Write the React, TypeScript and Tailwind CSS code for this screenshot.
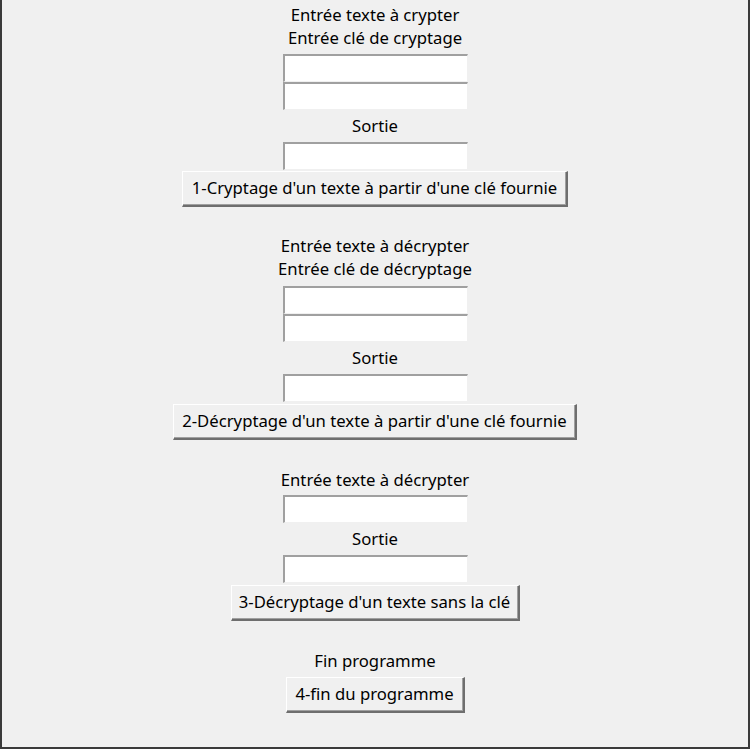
const font = { fontFamily: '"Noto Sans", "Open Sans", sans-serif' }

function Label({ text, className = '' }: { text: string; className?: string }) {
  return (
    <div className={`flex items-center justify-center h-[23px] text-[16.7px] leading-none text-black ${className}`}>
      {text}
    </div>
  )
}

function Entry({ className = '' }: { className?: string }) {
  return (
    <div className={`w-[185px] h-[28px] bg-white border-t-2 border-l-2 border-t-[#a0a0a0] border-l-[#a0a0a0] border-b border-r border-b-[#f0f0f0] border-r-[#f0f0f0] ${className}`} />
  )
}

function Btn({ text, className = '' }: { text: string; className?: string }) {
  return (
    <button className={`h-[36px] flex items-center justify-center bg-[#f0f0f0] text-[16.7px] text-black leading-none border-t border-l border-t-white border-l-white border-b-2 border-r-2 border-b-[#6e6e6e] border-r-[#6e6e6e] shadow-[inset_-1px_-1px_0_#a0a0a0] ${className}`}>
      {text}
    </button>
  )
}

export default function App() {
  return (
    <div className="w-[750px] h-[749px] bg-[#f0f0f0] border-l-2 border-r-2 border-b-2 border-[#3a3a3a] overflow-hidden" style={font}>
      <div className="flex flex-col items-center">
        {/* section 1 */}
        <Label text="Entrée texte à crypter" className="mt-[4px]" />
        <Label text="Entrée clé de cryptage" />
        <Entry className="mt-[4px]" />
        <Entry />
        <Label text="Sortie" className="h-[32px]" />
        <Entry />
        <Btn text="1-Cryptage d'un texte à partir d'une clé fournie" className="mt-[1px] w-[386px]" />

        {/* section 2 */}
        <Label text="Entrée texte à décrypter" className="mt-[28px]" />
        <Label text="Entrée clé de décryptage" />
        <Entry className="mt-[5px]" />
        <Entry />
        <Label text="Sortie" className="h-[32px]" />
        <Entry />
        <Btn text="2-Décryptage d'un texte à partir d'une clé fournie" className="mt-[2px] w-[404px]" />

        {/* section 3 */}
        <Label text="Entrée texte à décrypter" className="mt-[29px]" />
        <Entry className="mt-[3px]" />
        <Label text="Sortie" className="h-[32px]" />
        <Entry />
        <Btn text="3-Décryptage d'un texte sans la clé" className="mt-[2px] w-[289px]" />

        {/* section 4 */}
        <Label text="Fin programme" className="mt-[29px]" />
        <Btn text="4-fin du programme" className="mt-[4px] w-[179px]" />
      </div>
    </div>
  )
}
